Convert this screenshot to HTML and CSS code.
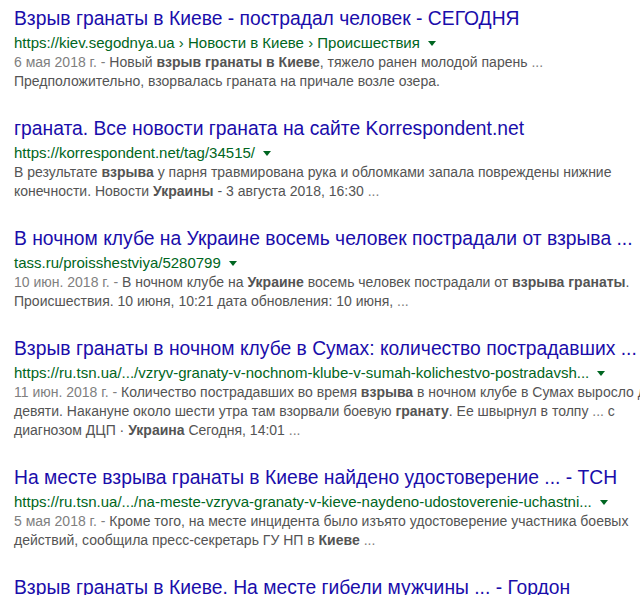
FILE: index.html
```html
<!DOCTYPE html>
<html lang="ru">
<head>
<meta charset="utf-8">
<link rel="stylesheet" href="styles.css">
</head>
<body>
<div class="results">
  <div class="result">
    <div class="title">Взрыв гранаты в Киеве - пострадал человек - СЕГОДНЯ</div>
    <div class="url">https://kiev.segodnya.ua › Новости в Киеве › Происшествия<span class="caret"></span></div>
    <div class="snippet"><span class="date">6 мая 2018 г. - </span>Новый <b>взрыв гранаты в Киеве</b>, тяжело ранен молодой парень <span class="ell">...</span><br>Предположительно, взорвалась граната на причале возле озера.</div>
  </div>
  <div class="result">
    <div class="title">граната. Все новости граната на сайте Korrespondent.net</div>
    <div class="url">https://korrespondent.net/tag/34515/<span class="caret"></span></div>
    <div class="snippet">В результате <b>взрыва</b> у парня травмирована рука и обломками запала повреждены нижние<br>конечности. Новости <b>Украины</b> - 3 августа 2018, 16:30 <span class="ell">...</span></div>
  </div>
  <div class="result">
    <div class="title">В ночном клубе на Украине восемь человек пострадали от взрыва ...</div>
    <div class="url">tass.ru/proisshestviya/5280799<span class="caret"></span></div>
    <div class="snippet"><span class="date">10 июн. 2018 г. - </span>В ночном клубе на <b>Украине</b> восемь человек пострадали от <b>взрыва гранаты</b>.<br>Происшествия. 10 июня, 10:21 дата обновления: 10 июня, <span class="ell">...</span></div>
  </div>
  <div class="result">
    <div class="title">Взрыв гранаты в ночном клубе в Сумах: количество пострадавших ...</div>
    <div class="url">https://ru.tsn.ua/.../vzryv-granaty-v-nochnom-klube-v-sumah-kolichestvo-postradavsh...<span class="caret"></span></div>
    <div class="snippet"><span class="date">11 июн. 2018 г. - </span>Количество пострадавших во время <b>взрыва</b> в ночном клубе в Сумах выросло до<br>девяти. Накануне около шести утра там взорвали боевую <b>гранату</b>. Ее швырнул в толпу <span class="ell">...</span> с<br>диагнозом ДЦП · <b>Украина</b> Сегодня, 14:01 <span class="ell">...</span></div>
  </div>
  <div class="result">
    <div class="title">На месте взрыва гранаты в Киеве найдено удостоверение ... - ТСН</div>
    <div class="url">https://ru.tsn.ua/.../na-meste-vzryva-granaty-v-kieve-naydeno-udostoverenie-uchastni...<span class="caret"></span></div>
    <div class="snippet"><span class="date">5 мая 2018 г. - </span>Кроме того, на месте инцидента было изъято удостоверение участника боевых<br>действий, сообщила пресс-секретарь ГУ НП в <b>Киеве</b> <span class="ell">...</span></div>
  </div>
  <div class="result">
    <div class="title">Взрыв гранаты в Киеве. На месте гибели мужчины ... - Гордон</div>
  </div>
</div>
</body>
</html>
```
FILE: styles.css
```css
html, body {
  margin: 0;
  padding: 0;
  background: #ffffff;
  overflow: hidden;
}
body {
  width: 640px;
  height: 595px;
  font-family: "Liberation Sans", Arial, sans-serif;
}
.results {
  display: flex;
  flex-direction: column;
  gap: 26px;
  padding: 7px 0 0 14px;
}
.result {
  display: flex;
  flex-direction: column;
}
.title {
  font-size: 19.3px;
  line-height: 24px;
  color: #1a0dab;
  white-space: nowrap;
}
.url {
  font-size: 15px;
  line-height: 20px;
  margin-top: 2px;
  color: #006621;
  white-space: nowrap;
  display: flex;
  align-items: center;
}
.caret {
  display: inline-block;
  width: 0;
  height: 0;
  margin-left: 8px;
  border-left: 4px solid transparent;
  border-right: 4px solid transparent;
  border-top: 5px solid #006621;
}
.snippet {
  font-size: 14px;
  line-height: 19px;
  color: #545454;
  white-space: nowrap;
}
.snippet b {
  font-weight: bold;
  color: #545454;
}
.date, .ell {
  color: #808080;
}
```
